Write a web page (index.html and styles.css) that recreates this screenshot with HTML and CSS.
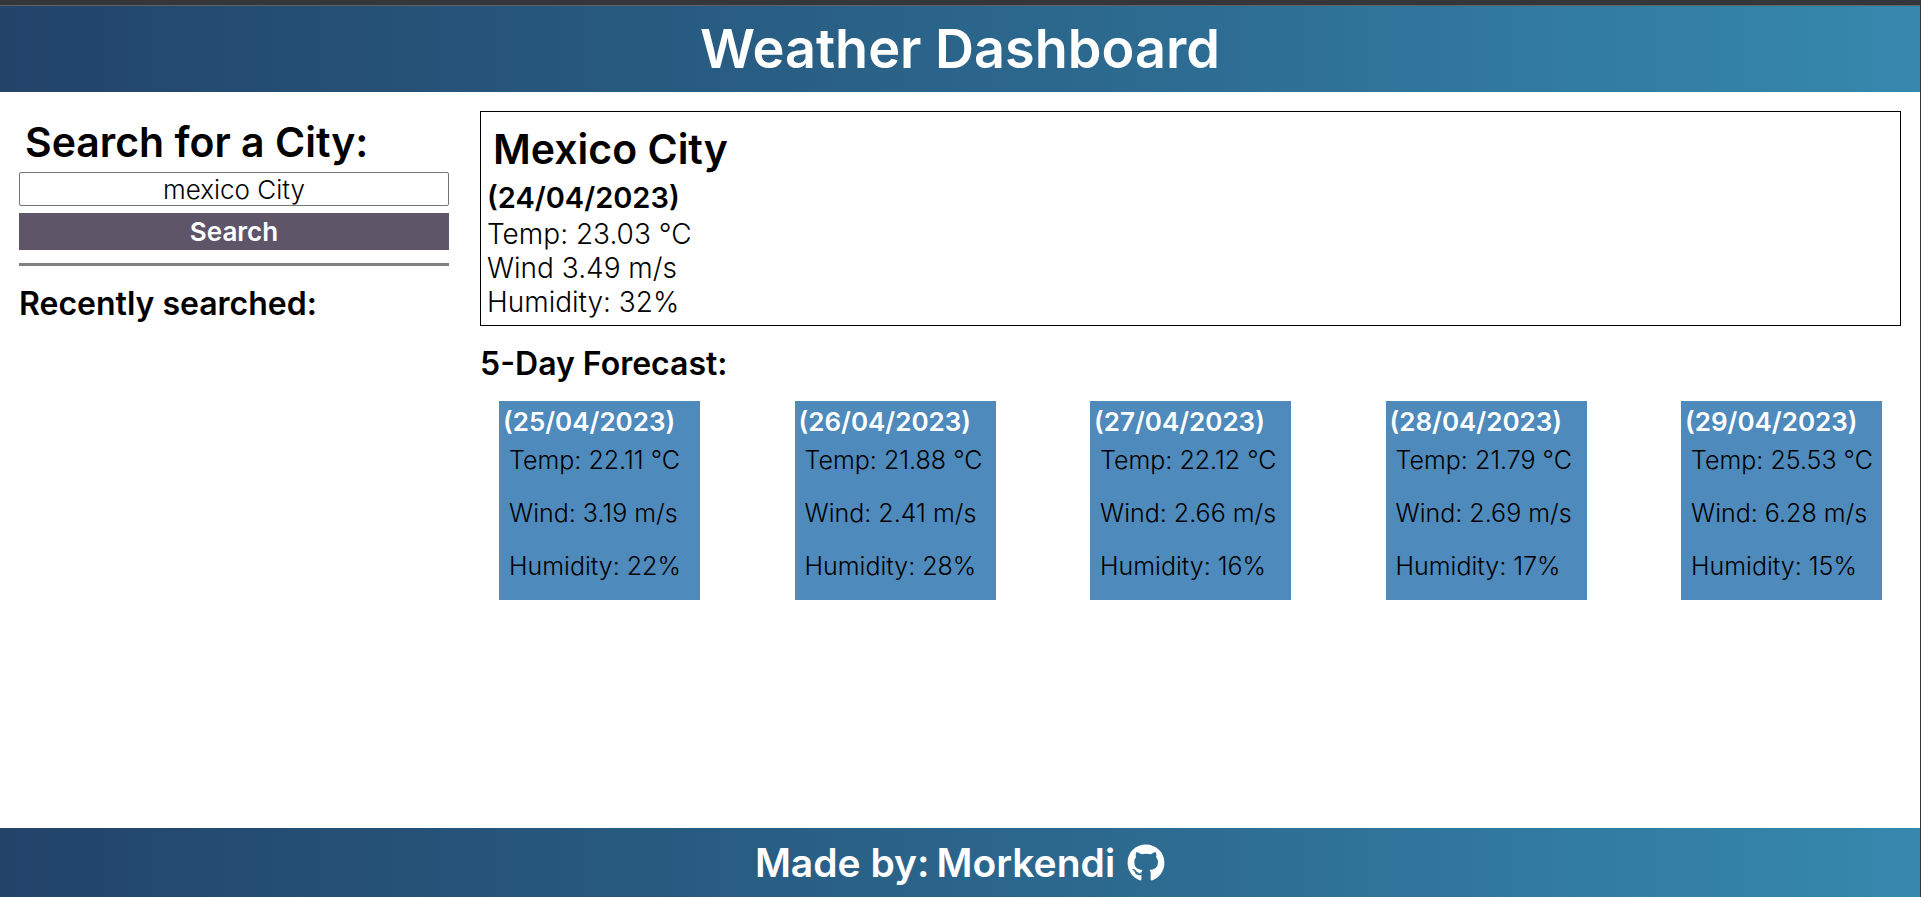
FILE: index.html
```html
<!DOCTYPE html>
<html lang="en">
<head>
<meta charset="utf-8">
<title>Weather Dashboard</title>
<link rel="stylesheet" href="styles.css">
</head>
<body>
<header class="header"><h1 class="title">Weather Dashboard</h1></header>
<main class="main">
  <aside class="sidebar">
    <form class="search">
      <h2 class="heading"><label for="city">Search for a City:</label></h2>
      <input class="search-input" id="city" type="text" value="mexico City">
      <button class="search-button" type="button">Search</button>
    </form>
    <hr class="divider">
    <h3 class="subheading">Recently searched:</h3>
  </aside>
  <section class="results">
    <article class="current">
      <h2 class="heading current-city">Mexico City</h2>
      <h3 class="current-date">(24/04/2023)</h3>
      <p class="current-line">Temp: 23.03 °C</p>
      <p class="current-line">Wind 3.49 m/s</p>
      <p class="current-line">Humidity: 32%</p>
    </article>
    <h3 class="subheading">5-Day Forecast:</h3>
    <div class="forecast">
      <article class="card">
        <h4 class="card-date">(25/04/2023)</h4>
        <p class="card-line">Temp: 22.11 °C</p>
        <p class="card-line">Wind: 3.19 m/s</p>
        <p class="card-line">Humidity: 22%</p>
      </article>
      <article class="card">
        <h4 class="card-date">(26/04/2023)</h4>
        <p class="card-line">Temp: 21.88 °C</p>
        <p class="card-line">Wind: 2.41 m/s</p>
        <p class="card-line">Humidity: 28%</p>
      </article>
      <article class="card">
        <h4 class="card-date">(27/04/2023)</h4>
        <p class="card-line">Temp: 22.12 °C</p>
        <p class="card-line">Wind: 2.66 m/s</p>
        <p class="card-line">Humidity: 16%</p>
      </article>
      <article class="card">
        <h4 class="card-date">(28/04/2023)</h4>
        <p class="card-line">Temp: 21.79 °C</p>
        <p class="card-line">Wind: 2.69 m/s</p>
        <p class="card-line">Humidity: 17%</p>
      </article>
      <article class="card">
        <h4 class="card-date">(29/04/2023)</h4>
        <p class="card-line">Temp: 25.53 °C</p>
        <p class="card-line">Wind: 6.28 m/s</p>
        <p class="card-line">Humidity: 15%</p>
      </article>
    </div>
  </section>
</main>
<footer class="footer">
  <span>Made by:</span>
  <a class="author" href="#">Morkendi
    <svg class="github" viewBox="0 0 496 512" aria-hidden="true"><path fill="currentColor" d="M165.900 397.400c0 2-2.300 3.600-5.200 3.600-3.300.3-5.600-1.300-5.600-3.600 0-2 2.300-3.600 5.200-3.600 3-.3 5.600 1.300 5.600 3.600zm-31.100-4.500c-.7 2 1.300 4.300 4.300 4.900 2.600 1 5.600 0 6.200-2s-1.300-4.300-4.300-5.200c-2.600-.7-5.500.3-6.200 2.300zm44.200-1.700c-2.900.7-4.900 2.600-4.600 4.900.3 2 2.900 3.300 5.900 2.600 2.900-.7 4.900-2.600 4.600-4.600-.3-1.900-3-3.200-5.900-2.900zM244.800 8C106.100 8 0 113.300 0 252c0 110.900 69.800 205.800 169.500 239.200 12.800 2.300 17.300-5.600 17.300-12.100 0-6.200-.3-40.400-.3-61.400 0 0-70 15-84.700-29.800 0 0-11.400-29.100-27.800-36.600 0 0-22.900-15.700 1.600-15.400 0 0 24.900 2 38.600 25.800 21.900 38.600 58.600 27.500 72.900 20.900 2.300-16 8.800-27.100 16-33.700-55.900-6.200-112.300-14.300-112.300-110.500 0-27.500 7.600-41.300 23.600-58.900-2.600-6.500-11.100-33.300 2.600-67.900 20.900-6.500 69 27 69 27 20-5.600 41.500-8.500 62.800-8.500s42.800 2.900 62.800 8.500c0 0 48.100-33.600 69-27 13.700 34.700 5.200 61.400 2.600 67.900 16 17.700 25.800 31.500 25.800 58.900 0 96.500-58.900 104.200-114.800 110.500 9.200 7.900 17 22.900 17 46.400 0 33.700-.3 75.400-.3 83.600 0 6.500 4.600 14.400 17.300 12.100C428.200 457.800 496 362.900 496 252 496 113.300 383.500 8 244.800 8z"/></svg>
  </a>
</footer>
</body>
</html>
```
FILE: styles.css
```css
* { box-sizing: border-box; }

body {
  margin: 0;
  min-height: 100vh;
  display: flex;
  flex-direction: column;
  border-top: 5px solid #35363a;
  border-right: 1px solid #35363a;
  background: #fff;
  color: #000;
  font-family: Inter, "Open Sans", sans-serif;
  font-weight: 300;
}

h1, h2, h3, h4, p { margin: 0; }
h1, h2, h3, h4 { font-weight: 600; }

.header, .footer {
  display: flex;
  justify-content: center;
  align-items: center;
  background: linear-gradient(to right, #234469, #26547a 25%, #2d6b91 60%, #3688ae);
  color: #fff;
}
.header { border-top: 1px solid #5f6368; }
.title { font-size: 54px; line-height: 86px; }

.main {
  flex: 1;
  display: grid;
  grid-template-columns: 430fr 1421fr;
  gap: 31px;
  padding: 19px;
}

.heading { padding-left: 6px; font-size: 41px; line-height: 48px; }
.subheading { margin-top: 18px; font-size: 32px; line-height: 40px; }

.search { display: flex; flex-direction: column; padding-top: 7px; }
.search-input, .search-button {
  width: 100%;
  padding: 0;
  font-family: inherit;
  font-size: 26px;
  text-align: center;
}
.search-input {
  height: 34px;
  margin-top: 6px;
  border: 1px solid #767676;
  border-radius: 2px;
  background: #fff;
  color: #000;
  font-weight: 300;
}
.search-button {
  height: 37px;
  margin-top: 7px;
  border: 0;
  background: #5f5568;
  color: #fff;
  font-weight: 600;
}
.divider { height: 3px; margin: 13px 0 0; border: 0; background: #808080; }

.current { padding: 13px 6px 6px; border: 1px solid #000; }
.current-date { margin-top: 5px; font-size: 29px; line-height: 39px; }
.current-line { font-size: 28px; line-height: 34px; }

.forecast {
  display: flex;
  justify-content: space-between;
  margin-top: 17px;
  padding: 0 19px;
}
.card {
  width: 201px;
  padding: 3px 4px 18px;
  background: #4e8abc;
}
.card-date { color: #fff; font-size: 26px; line-height: 36px; }
.card-line { padding-left: 6px; font-size: 25px; line-height: 32px; margin-top: 21px; white-space: nowrap; }
.card-date + .card-line { margin-top: 4px; }

.footer { gap: 7px; font-size: 39px; font-weight: 600; line-height: 69px; }
.author { display: flex; align-items: center; gap: 12px; color: inherit; text-decoration: none; }
.github { width: 38px; height: 38px; }
```
